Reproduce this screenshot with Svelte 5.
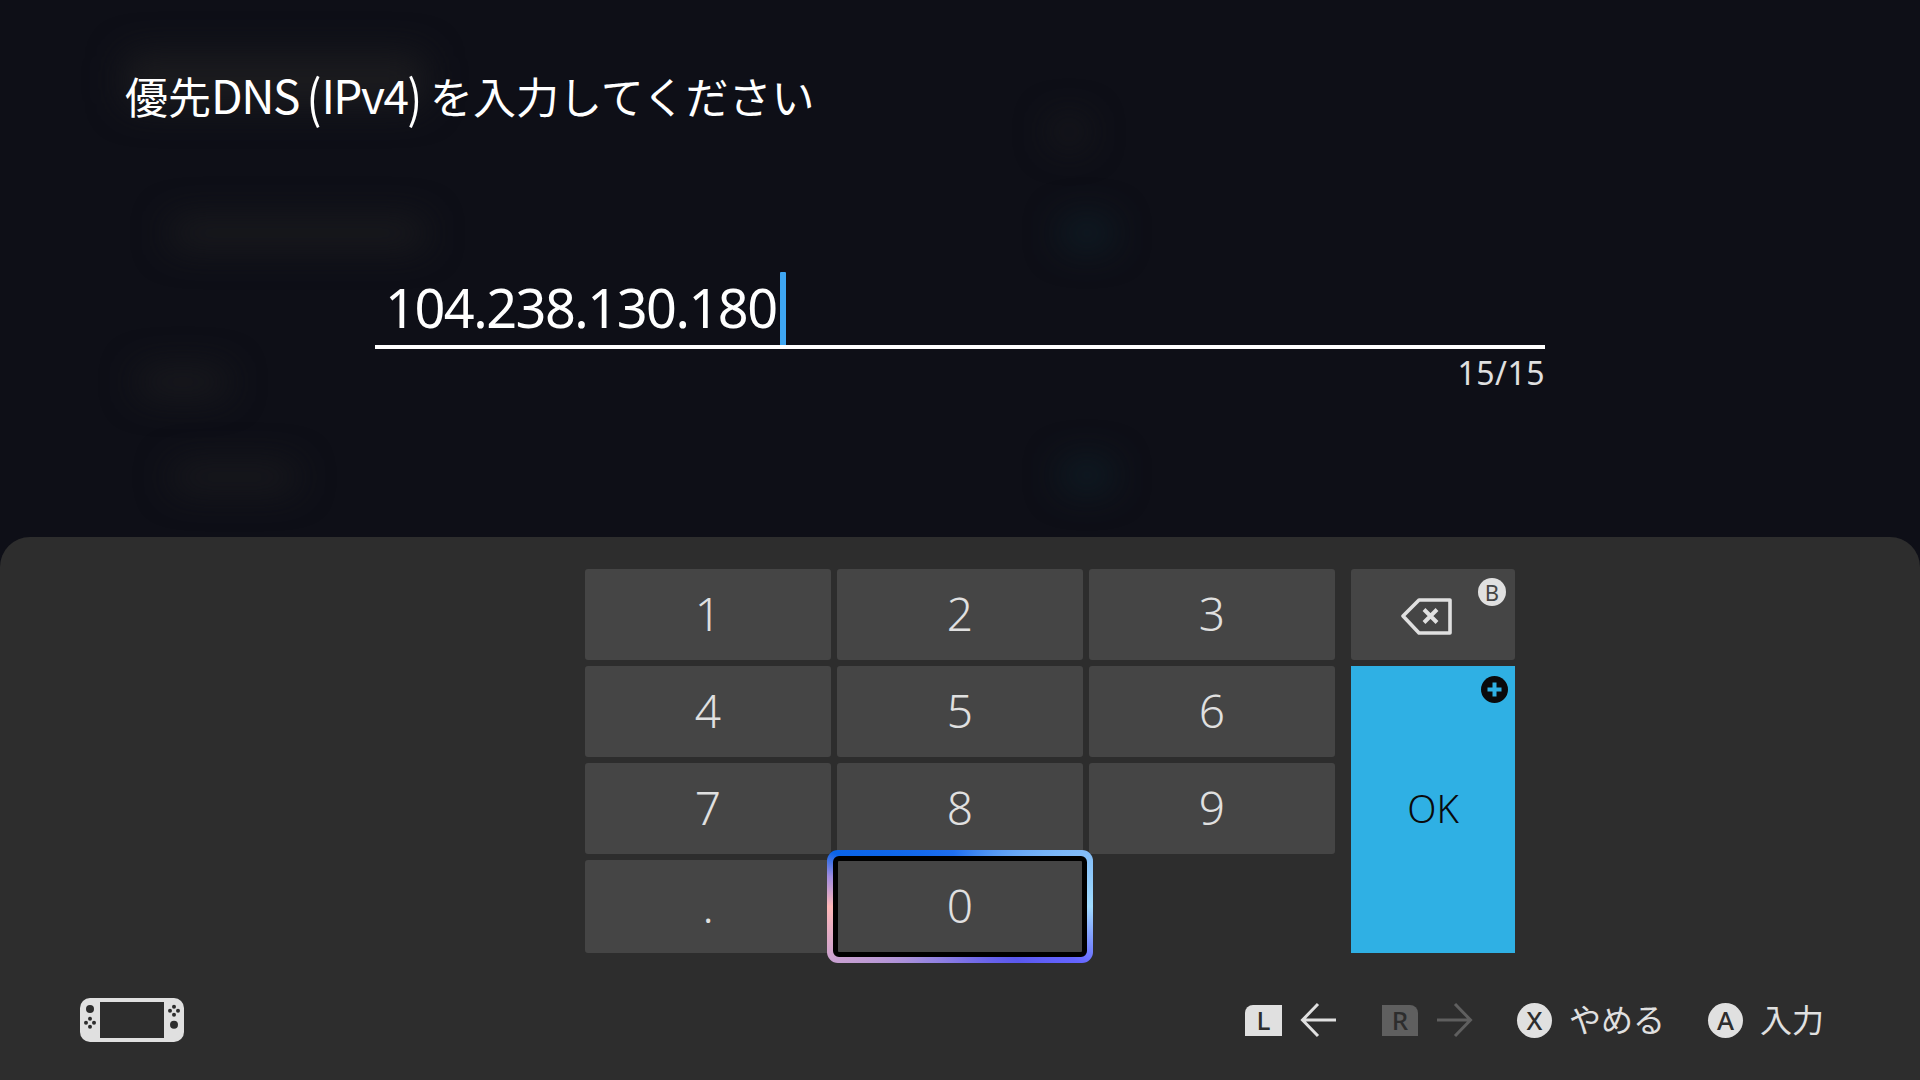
<script>
  const keys = ['1', '2', '3', '4', '5', '6', '7', '8', '9', '.', '0'];
  const value = '104.238.130.180';
  const blobs = [
    { cls: 'grey', x: 125, y: 55, w: 300, h: 50 },
    { cls: 'grey', x: 170, y: 220, w: 255, h: 26 },
    { cls: 'grey', x: 138, y: 370, w: 90, h: 24 },
    { cls: 'grey', x: 172, y: 466, w: 125, h: 22 },
    { cls: 'grey', x: 1052, y: 120, w: 34, h: 24 },
    { cls: 'teal', x: 1062, y: 220, w: 50, h: 26 },
    { cls: 'teal', x: 1062, y: 462, w: 50, h: 26 }
  ];
</script>

<div class="screen">
  <div class="blurred">
    {#each blobs as b}
      <div class="blob {b.cls}" style="left:{b.x}px;top:{b.y}px;width:{b.w}px;height:{b.h}px"></div>
    {/each}
  </div>

  <section class="entry">
    <h1 class="title">優先<span class="latin">DNS</span><span class="paren open">(</span><span class="latin">IPv4</span><span class="paren close">)</span>を入力してください</h1>
    <div class="field">
      <div class="value">{value}<span class="cursor"></span></div>
      <div class="count">15/15</div>
    </div>
  </section>

  <section class="panel">
    <div class="keyboard">
      {#each keys as k}
        <button class="key" class:focused={k === '0'}>
          {#if k === '0'}<span class="ring"><span class="ring-inner"></span></span>{/if}
          <span class="label">{k}</span>
        </button>
      {/each}
      <button class="key back">
        <svg width="52" height="38" viewBox="0 0 52 38" fill="none" stroke="#e0e0e0" stroke-width="3.6" stroke-linejoin="round">
          <path d="M2 19 18 3H49V36H18Z" />
          <path d="M23 12.500 36 25.500M36 12.500 23 25.500" stroke-width="4" />
        </svg>
        <span class="badge b-badge">B</span>
      </button>
      <button class="key ok">
        <span class="ok-label">OK</span>
        <span class="plus">
          <svg width="27" height="27" viewBox="0 0 27 27"><circle cx="13.500" cy="13.500" r="13.500" fill="#0a0a0c" /><path d="M13.500 6.500V20.500M6.500 13.500H20.500" stroke="#2fb0e4" stroke-width="4" /></svg>
        </span>
      </button>
    </div>

    <footer class="footer">
      <svg class="console" width="104" height="44" viewBox="0 0 104 44">
        <rect width="104" height="44" rx="10" fill="#e0e0e0" />
        <rect x="20" y="4" width="64" height="36" fill="#2d2d2d" />
        <g fill="#2d2d2d">
          <circle cx="10" cy="11" r="4" />
          <circle cx="10" cy="20.700" r="2" /><circle cx="10" cy="28.700" r="2" /><circle cx="6" cy="24.700" r="2" /><circle cx="14" cy="24.700" r="2" />
          <circle cx="94" cy="26.700" r="4" />
          <circle cx="94" cy="8.700" r="2" /><circle cx="94" cy="16.700" r="2" /><circle cx="90" cy="12.700" r="2" /><circle cx="98" cy="12.700" r="2" />
        </g>
      </svg>
      <div class="hints">
        <span class="bumper left">L</span>
        <svg class="arrow" width="37" height="36" viewBox="0 0 37 36" fill="none" stroke="#e0e0e0" stroke-width="3"><path d="M36 18H3M18 2 2.500 18 18 34" /></svg>
        <span class="bumper right dim">R</span>
        <svg class="arrow" width="37" height="36" viewBox="0 0 37 36" fill="none" stroke="#5f5f5f" stroke-width="3"><path d="M1 18H34M19 2 34.500 18 19 34" /></svg>
        <span class="round x">X</span><span class="hint-label">やめる</span>
        <span class="round a">A</span><span class="hint-label">入力</span>
      </div>
    </footer>
  </section>
</div>

<style>
  :global(body) {
    margin: 0;
    background: #0e0f17;
  }

  .screen {
    position: relative;
    width: 1920px;
    height: 1080px;
    overflow: hidden;
    background: #0e0f17;
    font-family: "Noto Sans", "Noto Sans CJK JP", sans-serif;
    color: #e0e0e0;
  }

  .blurred {
    position: absolute;
    inset: 0;
  }

  .blob {
    position: absolute;
    filter: blur(18px);
    border-radius: 10px;
  }

  .blob.grey {
    background: #1c1c1f;
  }

  .blob.teal {
    background: #0e2029;
  }

  .entry {
    position: relative;
    height: 537px;
    box-sizing: border-box;
    padding: 61px 375px 0 125px;
  }

  .title {
    margin: 0;
    height: 66px;
    font-family: "Noto Sans CJK JP", sans-serif;
    font-weight: 400;
    font-size: 43px;
    line-height: 66px;
    color: #fff;
    white-space: nowrap;
  }

  .latin {
    font-size: 46px;
    letter-spacing: -1.5px;
  }

  .paren {
    display: inline-block;
    transform: scaleY(1.2);
  }

  .paren.open {
    margin-left: 8px;
  }

  .paren.close {
    margin-right: 8px;
  }

  .field {
    margin-left: 250px;
    width: 1170px;
    margin-top: 145px;
  }

  .value {
    position: relative;
    height: 77px;
    box-sizing: border-box;
    padding-left: 10px;
    border-bottom: 4px solid #fff;
    font-size: 54px;
    font-weight: 400;
    line-height: 70px;
    letter-spacing: -1.5px;
    color: #fff;
    white-space: nowrap;
  }

  .cursor {
    display: inline-block;
    width: 6px;
    height: 73px;
    margin-left: 3px;
    background: #3ea6f2;
    vertical-align: top;
    border-radius: 1px 1px 0 0;
  }

  .count {
    margin-top: 6px;
    text-align: right;
    font-size: 32px;
    font-weight: 400;
    line-height: 36px;
    letter-spacing: 0.5px;
  }

  .panel {
    position: relative;
    height: 543px;
    box-sizing: border-box;
    padding-top: 32px;
    background: #2d2d2d;
    border-radius: 30px 30px 0 0;
  }

  .keyboard {
    display: grid;
    grid-template-columns: 246px 246px 246px 164px;
    grid-template-rows: 91px 91px 91px 93px;
    gap: 6px;
    margin-left: 585px;
    width: 930px;
  }

  .key {
    position: relative;
    padding: 0 0 3px;
    border: 0;
    border-radius: 3px;
    background: #454545;
    color: #e0e0e0;
    font-family: inherit;
    font-size: 46px;
    font-weight: 350;
    line-height: 1;
  }

  .key.back {
    grid-column: 4;
    grid-row: 1;
    margin-left: 10px;
    width: 164px;
    padding: 0;
  }

  .key.back svg {
    display: block;
    margin: 2px 0 0 50px;
  }

  .key.ok {
    grid-column: 4;
    grid-row: 2 / span 3;
    margin-left: 10px;
    width: 164px;
    background: #2fb0e4;
    color: #0a0a0c;
    font-size: 38px;
    border-radius: 0;
  }

  .label {
    position: relative;
  }

  .ring {
    position: absolute;
    inset: -10px;
    padding: 6px;
    box-sizing: border-box;
    border-radius: 11px;
    background: conic-gradient(from 293deg,
      #0a64e8 0deg, #1f6ff0 60deg, #82bcf8 134deg, #a0dcff 157deg,
      #6464ff 182deg, #5a58ee 200deg, #9a88e0 280deg, #c8a0d0 314deg, #ffb8b8 337deg, #a08ce0 350deg, #0a64e8 360deg);
  }

  .ring-inner {
    display: block;
    height: 100%;
    box-sizing: border-box;
    border: 5px solid #000;
    border-radius: 6px;
    background: #454545;
  }

  .badge {
    position: absolute;
    top: 9px;
    right: 9px;
    width: 28px;
    height: 28px;
    border-radius: 50%;
    background: #e0e0e0;
    color: #454545;
    font-size: 22px;
    font-weight: 400;
    line-height: 28px;
    text-align: center;
  }

  .plus {
    position: absolute;
    top: 10px;
    right: 7px;
    line-height: 0;
  }

  .footer {
    display: flex;
    justify-content: space-between;
    align-items: center;
    margin-top: 45px;
    height: 44px;
    padding: 0 96px 0 80px;
  }

  .console {
    display: block;
  }

  .hints {
    display: flex;
    align-items: center;
  }

  .arrow {
    margin-left: 18px;
  }

  .bumper {
    width: 37px;
    height: 31px;
    background: #e0e0e0;
    color: #2d2d2d;
    font-size: 26px;
    font-weight: 500;
    line-height: 31px;
    text-align: center;
  }

  .bumper.left {
    border-radius: 8px 0 0 0;
  }

  .bumper.right {
    margin-left: 45px;
    width: 36px;
    border-radius: 0 8px 0 0;
  }

  .bumper.dim {
    background: #5f5f5f;
    color: #2d2d2d;
  }

  .round {
    width: 35px;
    height: 35px;
    border-radius: 50%;
    background: #e0e0e0;
    color: #2d2d2d;
    font-size: 26px;
    font-weight: 500;
    line-height: 35px;
    text-align: center;
  }

  .round.x {
    margin-left: 44px;
  }

  .round.a {
    margin-left: 43px;
  }

  .hint-label {
    margin-left: 17px;
    margin-top: -5px;
    font-family: "Noto Sans CJK JP", sans-serif;
    font-size: 32px;
    font-weight: 400;
    line-height: 44px;
  }
</style>
